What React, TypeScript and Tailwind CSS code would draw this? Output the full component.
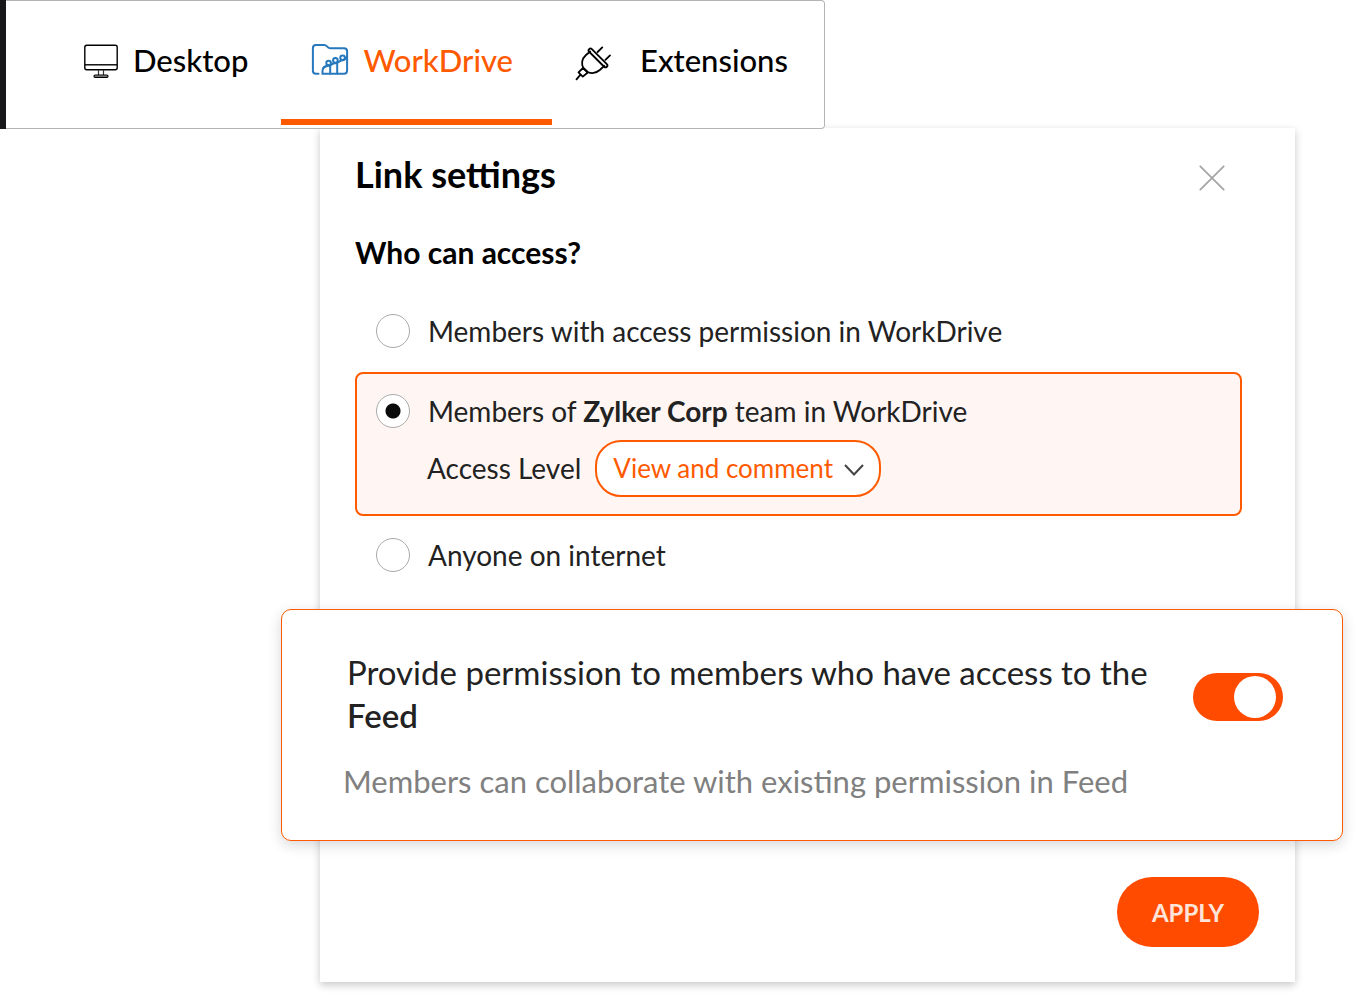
import React, { useState } from 'react';

function DesktopIcon() {
  return (
    <svg viewBox="0 0 36 36" className="w-9 h-9" fill="none" stroke="#000" strokeWidth="1.4">
      <rect x="1.8" y="2.3" width="32.4" height="24.4" rx="2" />
      <path d="M2 21.8 H34" />
      <path d="M15.5 27 V32 M20.5 27 V32" stroke="#333" strokeWidth="1.2" />
      <rect x="11" y="32" width="14" height="2.4" rx="1.2" fill="#999" strokeWidth="1.2" />
    </svg>
  );
}

function WorkDriveIcon() {
  return (
    <svg viewBox="0 0 38 36" className="w-[38px] h-9" fill="none" stroke="#2779bd" strokeWidth="2" strokeLinecap="round">
      <path d="M7.5 30.8 H5 C3 30.8 1.9 29.6 1.9 27.8 V5 C1.9 3 3 1.9 5 1.9 H13 C14.5 1.9 15.3 2.5 16.4 3.6 L17.2 4.4 C18 5.1 18.7 5.3 20 5.3 H33 C35 5.3 36.1 6.4 36.1 8.4 V27.6 C36.1 29.7 35 30.8 33 30.8 H11.5 V28 C11.5 25 13.5 23.2 16.5 22.7" />
      <circle cx="17.6" cy="20" r="2.3" />
      <circle cx="24.4" cy="17.4" r="2.3" />
      <circle cx="31.6" cy="14.8" r="2.3" />
      <path d="M19.2 30.5 V23 M26.2 30.5 V20.2 M12.5 24.8 C15 22.4 19 23.2 22.5 20.4 C25.5 20.4 27.5 19.4 30 17.6 C32.5 17.4 34.8 16 36 13.5" />
    </svg>
  );
}

function PlugIcon() {
  return (
    <svg viewBox="0 -2 38 38" className="w-[38px] h-[38px] overflow-visible" fill="none" stroke="#000" strokeWidth="1.8" strokeLinecap="round" strokeLinejoin="round">
      <rect x="11.5" y="12" width="25" height="3.8" rx="1.9" transform="rotate(45 24 13.9)" />
      <path d="M16.2 7.5 L12 11 C7.5 15 7.2 20.5 9.4 24 L13.6 28 C18 30 22.2 29.2 25.8 26 L30.3 21.8" />
      <path d="M23.6 8 L28.3 3.4 M31.4 15.9 L36 11.4" />
      <path d="M9 24 L13.8 28.5 L8.8 32.6 L4.5 28.4 Z M6.5 30.6 L2.5 35.4" />
    </svg>
  );
}

const tabs = [
  { id: 'desktop', label: 'Desktop', icon: <DesktopIcon />, box: 'pl-[77px] pr-[33px] gap-[14px]' },
  { id: 'workdrive', label: 'WorkDrive', icon: <WorkDriveIcon />, box: 'pl-[30px] pr-[39px] gap-[14px]' },
  { id: 'extensions', label: 'Extensions', icon: <PlugIcon />, box: 'pl-[22px] pr-9 gap-7' },
];

function TabBar() {
  const [active, setActive] = useState('workdrive');

  return (
    <nav className="relative z-10 w-fit flex border-l-[6px] border-[#18181b] bg-white">
      <div className="flex h-[129px] rounded-r border border-l-0 border-[#b4b4b4]">
        {tabs.map((tab) => (
          <button
            key={tab.id}
            type="button"
            onClick={() => setActive(tab.id)}
            className={`flex items-center pt-0.5 mb-[3px] border-b-[6px] text-[31px] leading-10 font-medium ${tab.box} ${
              active === tab.id ? 'border-[#ff5a00] text-[#ff5a00]' : 'border-transparent text-black'
            }`}
          >
            {tab.icon}
            <span className="pb-0.5">{tab.label}</span>
          </button>
        ))}
      </div>
    </nav>
  );
}

interface OptionProps {
  value: string;
  selected: string;
  onSelect: (value: string) => void;
  children: React.ReactNode;
}

function Option({ value, selected, onSelect, children }: OptionProps) {
  return (
    <label className="flex items-center gap-[18px] text-[28px] leading-[34px] text-[#222]">
      <input
        type="radio"
        name="access"
        value={value}
        checked={selected === value}
        onChange={() => onSelect(value)}
        className="appearance-none shrink-0 w-[34px] h-[34px] rounded-full border border-[#aaa] bg-white checked:bg-[radial-gradient(circle,#0a0a0a_7px,#fff_8px)]"
      />
      <span>{children}</span>
    </label>
  );
}

export default function App() {
  const [access, setAccess] = useState('team');

  return (
    <div className="bg-white font-['Lato',sans-serif] text-[#222]">
      <TabBar />
      <main className="-mt-px ml-80 mr-[66px] mb-4 pb-[35px] bg-white shadow-[0_3px_8px_rgba(0,0,0,0.22)]">
        <header className="flex items-start justify-between pt-[22px] pl-[35px] pr-[70px]">
          <h1 className="text-[36px] leading-[48px] pb-0.5 font-bold text-black">Link settings</h1>
          <button type="button" aria-label="Close" className="pt-[15px]">
            <svg viewBox="0 0 26 26" className="w-[26px] h-[26px]" stroke="#a6a6a6" strokeWidth="1.8" strokeLinecap="round">
              <path d="M1.3 1.3 L24.7 24.7 M24.7 1.3 L1.3 24.7" />
            </svg>
          </button>
        </header>

        <fieldset className="pl-[35px] pr-[53px]">
          <legend className="pt-8 text-[30px] leading-10 font-bold text-black">Who can access?</legend>
          <div className="pt-[42px] pl-[21px]">
            <Option value="members" selected={access} onSelect={setAccess}>
              Members with access permission in WorkDrive
            </Option>
          </div>
          <div className="mt-6 pt-5 pb-[17px] pl-[19px] rounded-lg border-2 border-[#ff5a00] bg-[#fff6f3]">
            <Option value="team" selected={access} onSelect={setAccess}>
              Members of <strong className="font-bold">Zylker Corp</strong> team in WorkDrive
            </Option>
            <div className="mt-3 flex items-center gap-[14px] pl-[51px]">
              <label htmlFor="level" className="text-[28px] leading-[34px] pb-0.5">Access Level</label>
              <div className="relative">
                <select
                  id="level"
                  className="appearance-none h-[57px] pl-4 pr-[45px] rounded-[26px] border-2 border-[#ff5a00] bg-white text-[26px] text-[#ff5a00]"
                >
                  <option>View and comment</option>
                </select>
                <svg viewBox="0 0 20 12" className="absolute right-[17px] top-6 w-5 h-3 pointer-events-none" fill="none" stroke="#444" strokeWidth="2">
                  <path d="M1 1 L10 10.5 L19 1" />
                </svg>
              </div>
            </div>
          </div>
          <div className="pt-[22px] pl-[21px]">
            <Option value="anyone" selected={access} onSelect={setAccess}>
              Anyone on internet
            </Option>
          </div>
        </fieldset>

        <section className="mt-[37px] -ml-[39px] -mr-12 pt-[41px] pb-[38px] pl-[61px] pr-[59px] rounded-[10px] border border-[#ff5a00] bg-white shadow-[0_4px_14px_rgba(0,0,0,0.16)]">
          <div className="flex items-end justify-between gap-8">
            <label htmlFor="feed" className="pl-1 text-[33px] leading-[43px]">
              Provide permission to members who have access to the <strong className="font-semibold">Feed</strong>
            </label>
            <input
              id="feed"
              type="checkbox"
              role="switch"
              defaultChecked
              className="appearance-none shrink-0 mb-4 w-[90px] h-12 p-[3px] rounded-full bg-gray-300 checked:bg-[#ff4b00] before:block before:w-[42px] before:h-[42px] before:rounded-full before:bg-white checked:before:ml-[38px]"
            />
          </div>
          <p className="pt-[23px] text-[31px] leading-[42px] text-[#808080]">
            Members can collaborate with existing permission in Feed
          </p>
        </section>

        <div className="flex justify-end pt-9 pr-9">
          <button type="button" className="h-[70px] w-[142px] pt-0.5 rounded-full bg-[#ff4b00] text-2xl font-bold text-[#ffe4d9]">
            APPLY
          </button>
        </div>
      </main>
    </div>
  );
}
